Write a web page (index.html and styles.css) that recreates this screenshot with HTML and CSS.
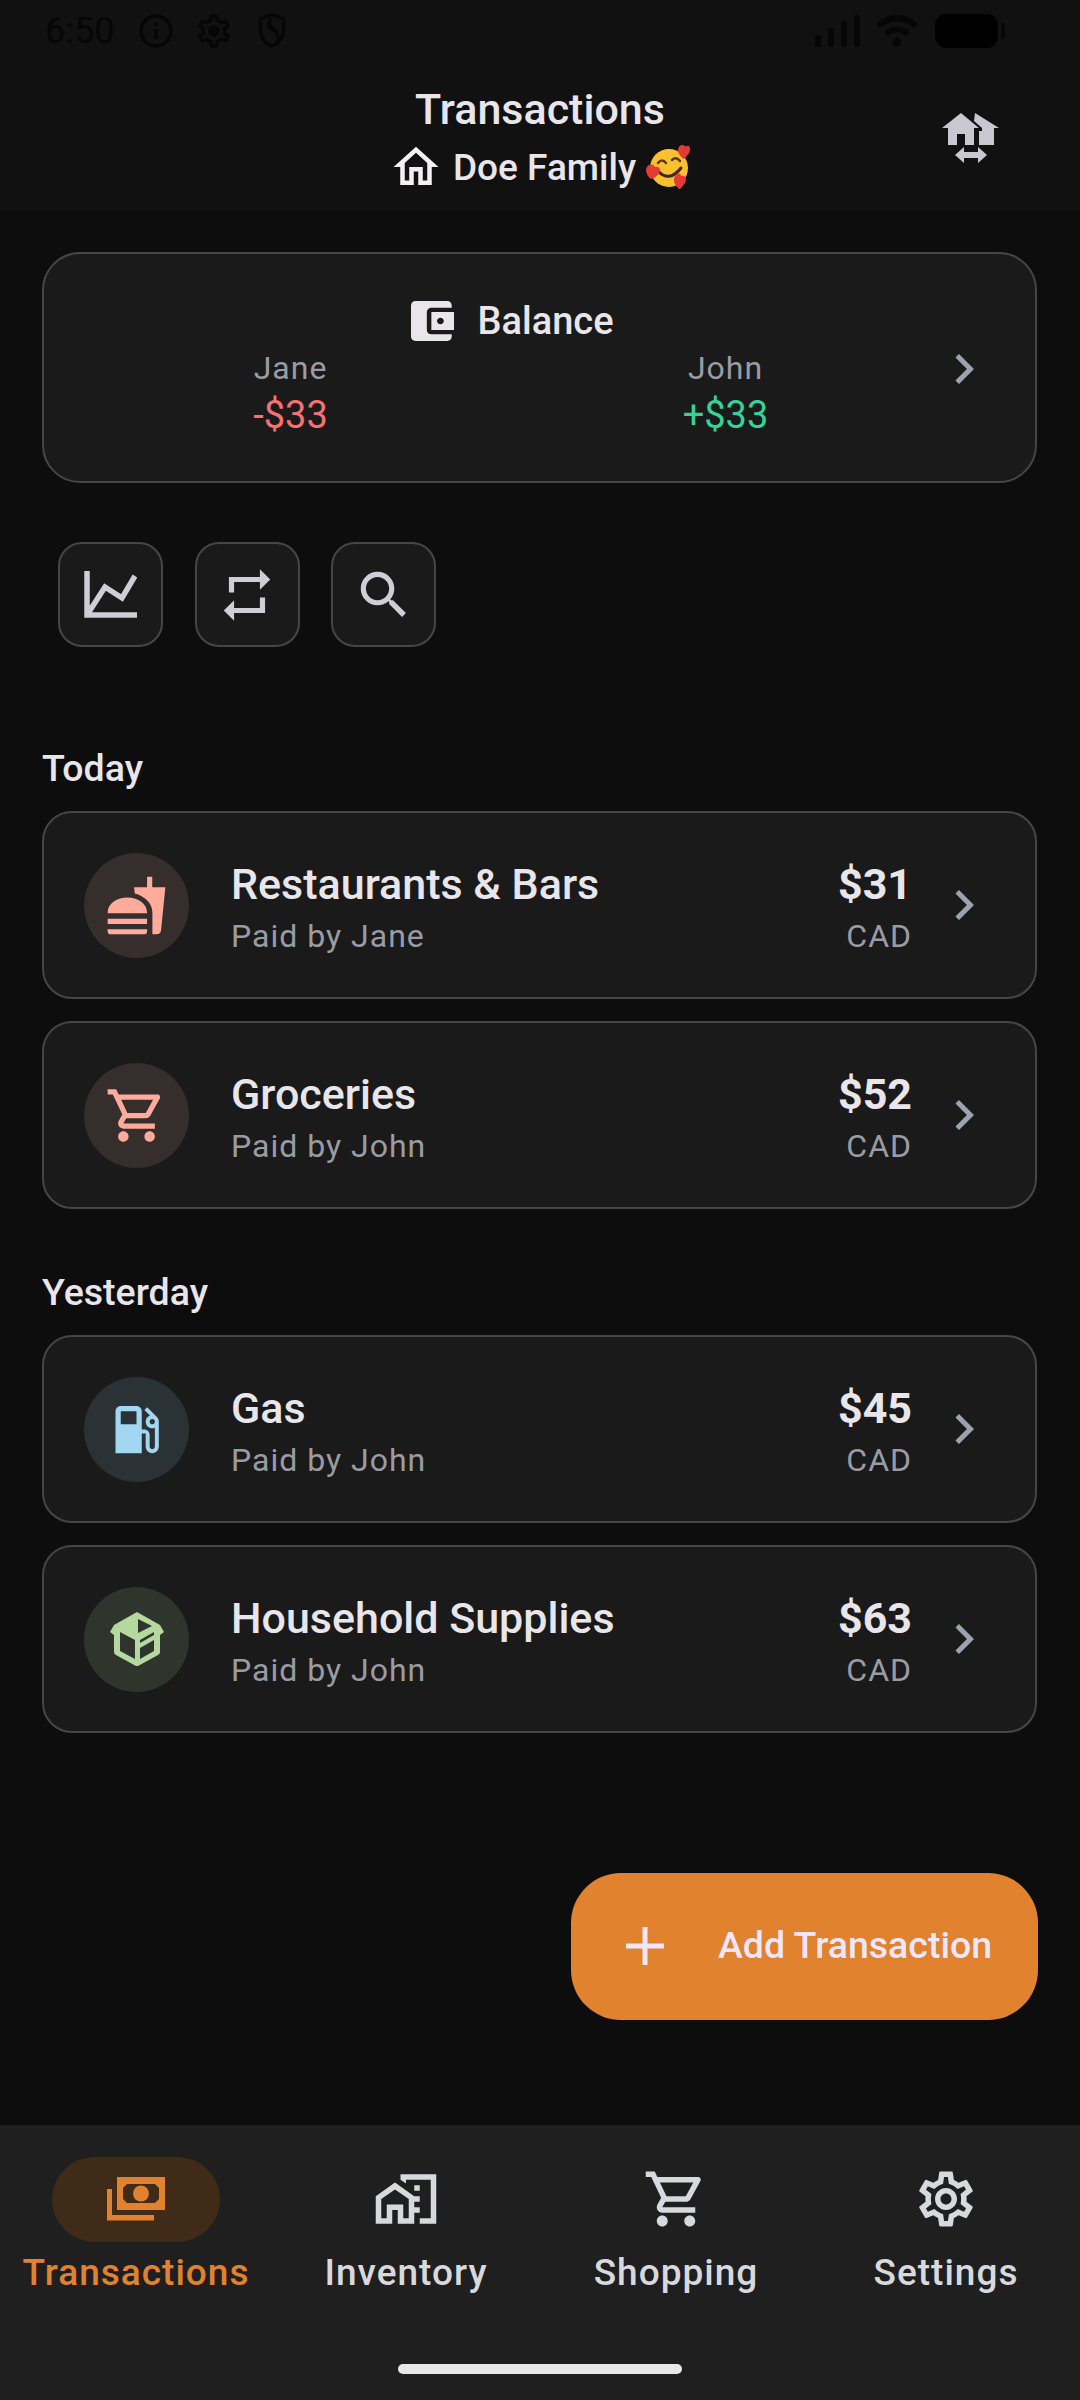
FILE: index.html
```html
<!DOCTYPE html>
<html lang="en">
  <head>
    <meta charset="UTF-8" />
    <title>Transactions</title>
    <link rel="stylesheet" href="styles.css">
  </head>
  <body>
    <!-- Status bar -->
    <div class="status-bar">
      <span class="status-time">6:50</span>
      <svg class="status-icon" viewBox="0 0 24 24"><path d="M11 7h2v2h-2zm0 4h2v6h-2zm1-9C6.48 2 2 6.48 2 12s4.48 10 10 10 10-4.48 10-10S17.52 2 12 2zm0 18c-4.41 0-8-3.59-8-8s3.59-8 8-8 8 3.59 8 8-3.59 8-8 8z"/></svg>
      <svg class="status-icon" viewBox="0 0 24 24"><path d="M19.430 12.980c.04-.32.07-.64.07-.98 0-.34-.03-.66-.07-.98l2.110-1.650c.19-.15.24-.42.12-.64l-2-3.460c-.09-.16-.26-.25-.44-.25-.06 0-.12.01-.17.03l-2.490 1c-.52-.4-1.080-.73-1.690-.98l-.38-2.650C14.460 2.180 14.250 2 14 2h-4c-.25 0-.46.18-.49.42l-.38 2.650c-.61.25-1.170.59-1.690.98l-2.490-1c-.06-.02-.12-.03-.18-.03-.17 0-.34.09-.43.25l-2 3.460c-.13.22-.07.49.12.64l2.110 1.650c-.04.32-.07.65-.07.98 0 .33.03.66.07.98l-2.110 1.650c-.19.15-.24.42-.12.64l2 3.460c.09.16.26.25.44.25.06 0 .12-.01.17-.03l2.490-1c.52.4 1.080.73 1.690.98l.38 2.650c.03.24.24.42.49.42h4c.25 0 .46-.18.49-.42l.38-2.650c.61-.25 1.170-.59 1.690-.98l2.490 1c.06.02.12.03.18.03.17 0 .34-.09.43-.25l2-3.460c.12-.22.07-.49-.12-.64l-2.110-1.650zm-1.980-1.710c.04.31.05.52.05.73 0 .21-.02.43-.05.73l-.14 1.130.89.7 1.080.84-.7 1.210-1.270-.51-1.040-.42-.9.68c-.43.32-.84.56-1.250.73l-1.060.43-.16 1.130-.2 1.350h-1.400l-.19-1.350-.16-1.130-1.060-.43c-.43-.18-.83-.41-1.230-.71l-.91-.7-1.060.43-1.270.51-.7-1.210 1.080-.84.89-.7-.14-1.130c-.03-.31-.05-.54-.05-.74s.02-.43.05-.73l.14-1.130-.89-.7-1.080-.84.7-1.210 1.270.51 1.040.42.9-.68c.43-.32.84-.56 1.250-.73l1.060-.43.16-1.130.2-1.350h1.390l.19 1.350.16 1.130 1.060.43c.43.18.83.41 1.230.71l.91.7 1.060-.43 1.270-.51.7 1.210-1.070.85-.89.7.14 1.130z"/><circle cx="12" cy="12" r="3.500"/></svg>
      <svg class="status-icon" viewBox="0 0 24 24"><path d="M12 1 4 4v7c0 5.1 3.4 9.8 8 11 4.600-1.200 8-5.900 8-11V4l-8-3zm6 10c0 4-2.500 7.700-6 8.900-3.500-1.200-6-4.900-6-8.900V5.400l6-2.200 6 2.200V11z"/><path d="M11 4C8 7 9 10 12 12s4 5 2 8l1.500-.8c2-3 1-7-2.300-9.400C11 8 10.300 6.500 12.500 4.500z"/></svg>
      <div class="status-right">
        <svg class="signal" viewBox="0 0 45 32"><rect x="0" y="20" width="6" height="12" rx="3"/><rect x="13" y="13" width="6" height="19" rx="3"/><rect x="26" y="6" width="6" height="26" rx="3"/><rect x="39" y="0" width="6" height="32" rx="3"/></svg>
        <svg class="wifi" viewBox="0 0 42 32"><path d="M0 9C12-3 30-3 42 9l-4 4C28 4 14 4 4 13z"/><path d="M8 17c8-7 18-7 26 0l-4 4c-6-5-12-5-18 0z"/><circle cx="21" cy="27" r="4.500"/></svg>
        <div class="battery"></div>
        <div class="battery-tip"></div>
      </div>
    </div>

    <!-- App bar -->
    <header class="app-bar">
      <h1 class="page-title">Transactions</h1>
      <div class="family-row">
        <svg class="family-home" viewBox="0 0 24 24"><path d="M12 5.690l5 4.500V18h-2v-6H9v6H7v-7.810l5-4.500M12 3 2 12h3v8h6v-6h2v6h6v-8h3L12 3z"/></svg>
        <span>Doe Family</span>
        <svg class="family-emoji" viewBox="0 0 44 44">
          <circle cx="23" cy="23" r="19" fill="#fbc02d"/>
          <path d="M12 18q4-5 8 0M26 15q4-4 8 1" fill="none" stroke="#5b3a1a" stroke-width="2.500" stroke-linecap="round"/>
          <path d="M12 26q11 12 23-3" fill="none" stroke="#3e2723" stroke-width="3" stroke-linecap="round"/>
          <path d="M36 0c2 0 4 1 4 2 1-2 4-2 4 2 0 4-4 8-6 10-3-2-6-5-6-9 0-3 2-5 4-5z" fill="#e53935"/>
          <path d="M4 20c2-1 4 0 5 2 2-1 5 0 5 3 0 5-6 8-9 9-3-2-5-6-5-9 0-3 2-5 4-5z" fill="#e53935"/>
          <path d="M31 29c2-1 4 0 4 2 2-1 5 0 5 3 0 4-4 8-6 10-3-1-6-5-6-9 0-3 1-5 3-6z" fill="#e53935"/>
        </svg>
      </div>
      <svg class="switch-icon" viewBox="0 0 57 50">
        <path d="M19 0 37 15h-5v17H23V21h-8v11H6V15H0z"/>
        <path d="M33 0 57 15h-5v17H37V18h3v-3L32 8z"/>
        <path d="M13 42l9-8v5h14v-5l9 8-9 8v-5H22v5z"/>
      </svg>
    </header>

    <main class="content">
      <!-- Balance -->
      <section class="card balance-card">
        <div class="balance-title">
          <svg class="wallet-icon" viewBox="3 3 19 18" preserveAspectRatio="none"><path d="M21 18v1c0 1.100-.9 2-2 2H5c-1.110 0-2-.9-2-2V5c0-1.100.89-2 2-2h14c1.100 0 2 .9 2 2v1h-9c-1.110 0-2 .9-2 2v8c0 1.100.89 2 2 2h9zm-9-2h10V8H12v8zm4-2.500c-.83 0-1.500-.67-1.500-1.500s.67-1.500 1.500-1.500 1.500.67 1.500 1.500-.67 1.500-1.500 1.500z"/></svg>
          <span>Balance</span>
        </div>
        <div class="balance-people">
          <div class="person"><div class="person-name">Jane</div><div class="amount-neg">-$33</div></div>
          <div class="person"><div class="person-name">John</div><div class="amount-pos">+$33</div></div>
        </div>
        <svg class="chevron balance-chevron" viewBox="0 0 24 24"><path d="M10 6 8.590 7.410 13.170 12l-4.580 4.590L10 18l6-6z"/></svg>
      </section>

      <!-- Quick actions -->
      <div class="tools">
        <button class="tool-btn">
          <svg viewBox="0 0 53 47"><path d="M3 0v44h50M3 44 21 16l17 11L51 5" fill="none" stroke="#cfcdd6" stroke-width="5.500"/></svg>
        </button>
        <button class="tool-btn">
          <svg class="tool-icon" viewBox="0 0 24 24"><path d="M7 7h10v3l4-4-4-4v3H5v6h2V7zm10 10H7v-3l-4 4 4 4v-3h12v-6h-2v4z"/></svg>
        </button>
        <button class="tool-btn">
          <svg class="tool-icon" viewBox="0 0 24 24"><path d="M15.500 14h-.79l-.28-.27C15.410 12.590 16 11.110 16 9.500 16 5.910 13.090 3 9.500 3S3 5.910 3 9.500 5.910 16 9.500 16c1.610 0 3.090-.59 4.230-1.570l.27.28v.79l5 4.990L20.490 19l-4.990-5zm-6 0C7.010 14 5 11.990 5 9.500S7.010 5 9.500 5 14 7.010 14 9.500 11.990 14 9.500 14z"/></svg>
        </button>
      </div>

      <h2 class="day-label day-today">Today</h2>
      <div class="tx-list">
        <div class="card tx-row">
          <div class="tx-circle circle-food">
            <svg viewBox="0 0 24 24"><path d="M18.060 22.990h1.660c.84 0 1.530-.64 1.630-1.460L23 5.050h-5V1h-1.970v4.050h-4.970l.3 2.340c1.710.47 3.310 1.320 4.270 2.260 1.440 1.420 2.430 2.890 2.430 5.290v8.050zM1 21.990V21h15.030v.99c0 .55-.45 1-1.010 1H2.010c-.56 0-1.010-.45-1.010-1zm15.030-7c0-8-15.030-8-15.030 0h15.030zM1.020 17h15v2h-15z"/></svg>
          </div>
          <div class="tx-text">
            <div class="tx-name">Restaurants &amp; Bars</div>
            <div class="tx-paid">Paid by Jane</div>
          </div>
          <div class="tx-amount"><div class="tx-value">$31</div><div class="tx-currency">CAD</div></div>
          <svg class="chevron" viewBox="0 0 24 24"><path d="M10 6 8.590 7.410 13.170 12l-4.580 4.590L10 18l6-6z"/></svg>
        </div>
        <div class="card tx-row">
          <div class="tx-circle circle-food">
            <svg viewBox="0 0 24 24"><path d="M15.550 13c.75 0 1.410-.41 1.750-1.030l3.580-6.490c.37-.66-.11-1.480-.87-1.480H5.210l-.94-2H1v2h2l3.600 7.590-1.350 2.440C4.520 15.370 5.480 17 7 17h12v-2H7l1.100-2h7.450zM6.160 6h12.150l-2.760 5H8.530L6.160 6zM7 18c-1.100 0-1.990.9-1.990 2S5.900 22 7 22s2-.9 2-2-.9-2-2-2zm10 0c-1.100 0-1.990.9-1.990 2s.89 2 1.990 2 2-.9 2-2-.9-2-2-2z"/></svg>
          </div>
          <div class="tx-text">
            <div class="tx-name">Groceries</div>
            <div class="tx-paid">Paid by John</div>
          </div>
          <div class="tx-amount"><div class="tx-value">$52</div><div class="tx-currency">CAD</div></div>
          <svg class="chevron" viewBox="0 0 24 24"><path d="M10 6 8.590 7.410 13.170 12l-4.580 4.590L10 18l6-6z"/></svg>
        </div>
      </div>

      <h2 class="day-label day-yesterday">Yesterday</h2>
      <div class="tx-list">
        <div class="card tx-row">
          <div class="tx-circle circle-gas">
            <svg viewBox="0 0 24 24"><path d="M19.770 7.230l.01-.01-3.720-3.720L15 4.560l2.110 2.110c-.94.36-1.610 1.260-1.610 2.330 0 1.380 1.120 2.500 2.500 2.500.36 0 .69-.08 1-.21v7.210c0 .55-.45 1-1 1s-1-.45-1-1V14c0-1.100-.9-2-2-2h-1V5c0-1.100-.9-2-2-2H6c-1.100 0-2 .9-2 2v16h10v-7.500h1.500v5c0 1.380 1.120 2.500 2.500 2.500s2.500-1.120 2.500-2.500V9c0-.69-.28-1.320-.73-1.770zM12 10H6V5h6v5zm6 0c-.55 0-1-.45-1-1s.45-1 1-1 1 .45 1 1-.45 1-1 1z"/></svg>
          </div>
          <div class="tx-text">
            <div class="tx-name">Gas</div>
            <div class="tx-paid">Paid by John</div>
          </div>
          <div class="tx-amount"><div class="tx-value">$45</div><div class="tx-currency">CAD</div></div>
          <svg class="chevron" viewBox="0 0 24 24"><path d="M10 6 8.590 7.410 13.170 12l-4.580 4.590L10 18l6-6z"/></svg>
        </div>
        <div class="card tx-row">
          <div class="tx-circle circle-home">
            <svg class="box-icon" viewBox="0 0 54 54">
              <path fill-rule="evenodd" d="M27 0 50 13l4 7-4 3v17q0 2-2 3L28 54h-2L6 43q-2-1-2-3V23l-4-3 4-7zM28 7v14l14-7zM10 20v19l15 8V28zM30 28v3l14-8v-3zM30 36v11l14-8V28z"/>
            </svg>
          </div>
          <div class="tx-text">
            <div class="tx-name">Household Supplies</div>
            <div class="tx-paid">Paid by John</div>
          </div>
          <div class="tx-amount"><div class="tx-value">$63</div><div class="tx-currency">CAD</div></div>
          <svg class="chevron" viewBox="0 0 24 24"><path d="M10 6 8.590 7.410 13.170 12l-4.580 4.590L10 18l6-6z"/></svg>
        </div>
      </div>
    </main>

    <!-- Floating button -->
    <button class="fab">
      <svg class="fab-plus" viewBox="0 0 38 38"><path d="M16.500 0h5v16.500H38v5H21.500V38h-5V21.500H0v-5h16.500z"/></svg>
      <span>Add Transaction</span>
    </button>

    <!-- Bottom navigation -->
    <nav class="bottom-nav">
      <div class="nav-item nav-active">
        <div class="nav-pill">
          <svg class="nav-money" viewBox="0 0 60 45">
            <path fill-rule="evenodd" d="M11 0h48v33H11zM21 7l-4 4v11l4 4h28l4-4V11l-4-4z"/>
            <circle cx="35" cy="16.500" r="8"/>
            <path d="M1 12h5v26h42v5.500H1z"/>
          </svg>
        </div>
        <span>Transactions</span>
      </div>
      <div class="nav-item">
        <div class="nav-pill">
          <svg class="nav-icon" viewBox="0 0 24 24"><path d="M1 11v10h6v-5h2v5h6V11L8 6l-7 5zm12 8h-2v-5H5v5H3v-7l5-3.500 5 3.500v7zm4-12h-2v2h2V7zm0 4h-2v2h2v-2zm0 4h-2v2h2v-2zM10 3v1.970l2 1.430V5h9v14h-4v2h6V3H10z"/></svg>
        </div>
        <span>Inventory</span>
      </div>
      <div class="nav-item">
        <div class="nav-pill">
          <svg class="nav-icon" viewBox="0 0 24 24"><path d="M15.550 13c.75 0 1.410-.41 1.750-1.030l3.580-6.490c.37-.66-.11-1.480-.87-1.480H5.210l-.94-2H1v2h2l3.600 7.590-1.350 2.440C4.520 15.370 5.480 17 7 17h12v-2H7l1.100-2h7.450zM6.160 6h12.150l-2.760 5H8.530L6.160 6zM7 18c-1.100 0-1.990.9-1.990 2S5.900 22 7 22s2-.9 2-2-.9-2-2-2zm10 0c-1.100 0-1.990.9-1.990 2s.89 2 1.990 2 2-.9 2-2-.9-2-2-2z"/></svg>
        </div>
        <span>Shopping</span>
      </div>
      <div class="nav-item">
        <div class="nav-pill">
          <svg class="nav-icon" viewBox="0 0 24 24"><path d="M19.430 12.980c.04-.32.07-.64.07-.98 0-.34-.03-.66-.07-.98l2.110-1.650c.19-.15.24-.42.12-.64l-2-3.460c-.09-.16-.26-.25-.44-.25-.06 0-.12.01-.17.03l-2.490 1c-.52-.4-1.080-.73-1.690-.98l-.38-2.650C14.460 2.180 14.250 2 14 2h-4c-.25 0-.46.18-.49.42l-.38 2.650c-.61.25-1.170.59-1.690.98l-2.490-1c-.06-.02-.12-.03-.18-.03-.17 0-.34.09-.43.25l-2 3.460c-.13.22-.07.49.12.64l2.110 1.650c-.04.32-.07.65-.07.98 0 .33.03.66.07.98l-2.110 1.650c-.19.15-.24.42-.12.64l2 3.460c.09.16.26.25.44.25.06 0 .12-.01.17-.03l2.490-1c.52.4 1.080.73 1.690.98l.38 2.650c.03.24.24.42.49.42h4c.25 0 .46-.18.49-.42l.38-2.650c.61-.25 1.170-.59 1.690-.98l2.490 1c.06.02.12.03.18.03.17 0 .34-.09.43-.25l2-3.460c.12-.22.07-.49-.12-.64l-2.110-1.650zm-1.980-1.710c.04.31.05.52.05.73 0 .21-.02.43-.05.73l-.14 1.130.89.7 1.080.84-.7 1.210-1.270-.51-1.040-.42-.9.68c-.43.32-.84.56-1.250.73l-1.060.43-.16 1.130-.2 1.350h-1.400l-.19-1.350-.16-1.130-1.060-.43c-.43-.18-.83-.41-1.230-.71l-.91-.7-1.060.43-1.270.51-.7-1.210 1.080-.84.89-.7-.14-1.130c-.03-.31-.05-.54-.05-.74s.02-.43.05-.73l.14-1.130-.89-.7-1.080-.84.7-1.210 1.270.51 1.040.42.9-.68c.43-.32.84-.56 1.250-.73l1.060-.43.16-1.130.2-1.350h1.390l.19 1.350.16 1.130 1.060.43c.43.18.83.41 1.230.71l.91.7 1.060-.43 1.270-.51.7 1.210-1.070.85-.89.7.14 1.130zM12 8c-2.210 0-4 1.790-4 4s1.790 4 4 4 4-1.790 4-4-1.790-4-4-4zm0 6c-1.100 0-2-.9-2-2s.9-2 2-2 2 .9 2 2-.9 2-2 2z"/></svg>
        </div>
        <span>Settings</span>
      </div>
      <div class="home-bar"></div>
    </nav>
  </body>
</html>
```

FILE: styles.css
```css
* {
  box-sizing: border-box;
}

body {
  position: relative;
  display: flex;
  flex-direction: column;
  width: 1080px;
  height: 2400px;
  margin: 0;
  overflow: hidden;
  background-color: #0d0d0e;
  color: #e8e6ea;
  font-family: Roboto, "Noto Sans", sans-serif;
}

/* Status bar */
.status-bar {
  display: flex;
  align-items: center;
  height: 62px;
  padding: 0 75px 0 45px;
  background-color: #111112;
  color: #060606;
}
.status-time {
  width: 68px;
  margin-right: 23px;
  font-size: 36px;
}
.status-icon {
  width: 40px;
  height: 40px;
  margin-right: 18px;
  fill: #060606;
}
.status-right {
  display: flex;
  align-items: center;
  margin-left: auto;
}
.signal {
  width: 45px;
  height: 32px;
  margin-right: 16px;
  fill: #060606;
}
.wifi {
  width: 42px;
  height: 32px;
  margin-right: 17px;
  fill: #060606;
}
.battery {
  width: 63px;
  height: 34px;
  border-radius: 11px;
  background-color: #000;
}
.battery-tip {
  width: 4px;
  height: 16px;
  margin-left: 3px;
  border-radius: 0 3px 3px 0;
  background-color: #060606;
}

/* App bar */
.app-bar {
  position: relative;
  display: flex;
  flex-direction: column;
  align-items: center;
  height: 148px;
  padding-top: 23px;
  background-color: #111112;
}
.page-title {
  margin: 0;
  font-size: 43px;
  font-weight: 500;
  line-height: 48px;
}
.family-row {
  display: flex;
  align-items: center;
  height: 44px;
  margin-top: 12px;
  padding-right: 1px;
  font-size: 37px;
  font-weight: 500;
}
.family-home {
  width: 54px;
  height: 54px;
  margin-right: 10px;
  fill: #f2f0f4;
}
.family-emoji {
  width: 44px;
  height: 44px;
  margin-left: 10px;
}
.switch-icon {
  position: absolute;
  top: 51px;
  left: 942px;
  width: 57px;
  height: 50px;
  fill: #c9c7d0;
}

/* Cards */
.content {
  flex: 1;
  padding: 42px 43px 0 42px;
}
.card {
  border: 2px solid #464648;
  background-color: #1a1a1b;
}
.balance-card {
  position: relative;
  height: 231px;
  padding-top: 45px;
  border-radius: 38px;
}
.balance-title {
  display: flex;
  align-items: center;
  justify-content: center;
  height: 44px;
  padding-right: 55px;
  font-size: 38px;
  font-weight: 500;
}
.wallet-icon {
  width: 43px;
  height: 40px;
  margin-right: 24px;
  fill: #e8e6ea;
}
.balance-people {
  display: flex;
}
.person {
  width: 435px;
  text-align: center;
}
.person:first-child {
  margin-left: 29px;
}
.person-name {
  margin-top: 3px;
  color: #9a9ca3;
  font-size: 32px;
  letter-spacing: 1px;
  line-height: 44px;
}
.amount-neg,
.amount-pos {
  margin-top: 3px;
  font-size: 38px;
  line-height: 44px;
}
.amount-neg {
  color: #f87171;
}
.amount-pos {
  color: #34d399;
}
.chevron {
  flex: none;
  width: 60px;
  height: 60px;
  fill: #9ca3af;
}
.balance-chevron {
  position: absolute;
  top: 85px;
  left: 890px;
}

/* Quick actions */
.tools {
  display: flex;
  gap: 31.500px;
  margin-top: 59px;
  padding-left: 16px;
}
.tool-btn {
  display: flex;
  align-items: center;
  justify-content: center;
  width: 105px;
  height: 105px;
  padding: 0;
  border: 2px solid #464648;
  border-radius: 24px;
  background-color: #1a1a1b;
}
.tool-btn svg {
  width: 53px;
  height: 47px;
}
.tool-btn .tool-icon {
  width: 62px;
  height: 62px;
  fill: #cfcdd6;
}

/* Transaction list */
.day-label {
  margin: 0 0 23px;
  font-size: 37.500px;
  font-weight: 500;
  line-height: 40px;
}
.day-today {
  margin-top: 101px;
}
.day-yesterday {
  margin-top: 63px;
}
.tx-list {
  display: flex;
  flex-direction: column;
  gap: 22px;
}
.tx-row {
  display: flex;
  align-items: center;
  height: 188px;
  padding: 0 41px 0 40px;
  border-radius: 30px;
}
.tx-circle {
  display: flex;
  flex: none;
  align-items: center;
  justify-content: center;
  width: 105px;
  height: 105px;
  margin-right: 42px;
  border-radius: 50%;
}
.tx-circle svg {
  width: 63px;
  height: 63px;
}
.circle-food {
  background-color: #362d2d;
  fill: #ffab9c;
}
.circle-gas {
  background-color: #2a3236;
  fill: #a3d6f0;
}
.circle-home {
  background-color: #2f352d;
  fill: #b5d8a0;
}
.tx-circle .box-icon {
  width: 54px;
  height: 54px;
}
.tx-text {
  flex: 1;
  padding-top: 6px;
}
.tx-name {
  font-size: 43px;
  font-weight: 500;
  line-height: 46px;
}
.tx-paid {
  margin-top: 10px;
  color: #9a9ca3;
  font-size: 32px;
  letter-spacing: 1px;
  line-height: 38px;
}
.tx-amount {
  margin-right: 22px;
  padding-top: 6px;
  text-align: right;
}
.tx-value {
  font-size: 43px;
  font-weight: 700;
  line-height: 46px;
}
.tx-currency {
  margin-top: 10px;
  color: #9a9ca3;
  font-size: 32px;
  letter-spacing: 1px;
  line-height: 38px;
}

/* Floating button */
.fab {
  position: absolute;
  top: 1873px;
  left: 571px;
  display: flex;
  align-items: center;
  width: 467px;
  height: 147px;
  padding: 0 0 2px 55px;
  border: none;
  border-radius: 50px;
  background-color: #e0822e;
  color: #f0e6fa;
  font-family: inherit;
  font-size: 37.500px;
  font-weight: 500;
}
.fab-plus {
  width: 38px;
  height: 38px;
  margin-right: 54px;
  fill: #f0e6fa;
}
.fab span {
  margin-bottom: 2px;
}

/* Bottom navigation */
.bottom-nav {
  position: relative;
  display: grid;
  grid-template-columns: repeat(4, 270px);
  height: 275px;
  padding: 32px 0 0 1px;
  background-color: #1f1f20;
}
.nav-item {
  display: flex;
  flex-direction: column;
  align-items: center;
  color: #d8d9dd;
  font-size: 37px;
  font-weight: 500;
  letter-spacing: 1px;
  line-height: 44px;
}
.nav-pill {
  display: flex;
  align-items: center;
  justify-content: center;
  width: 168px;
  height: 85px;
  margin-bottom: 9px;
  border-radius: 43px;
}
.nav-icon {
  width: 66px;
  height: 66px;
  margin-top: -2px;
  fill: #d8d9dd;
}
.nav-active {
  color: #e0822e;
}
.nav-active .nav-pill {
  background-color: #3f2b18;
}
.nav-money {
  width: 60px;
  height: 45px;
  fill: #e0822e;
}
.home-bar {
  position: absolute;
  top: 239px;
  left: 398px;
  width: 284px;
  height: 10px;
  border-radius: 5px;
  background-color: #e8e8e8;
}
```
